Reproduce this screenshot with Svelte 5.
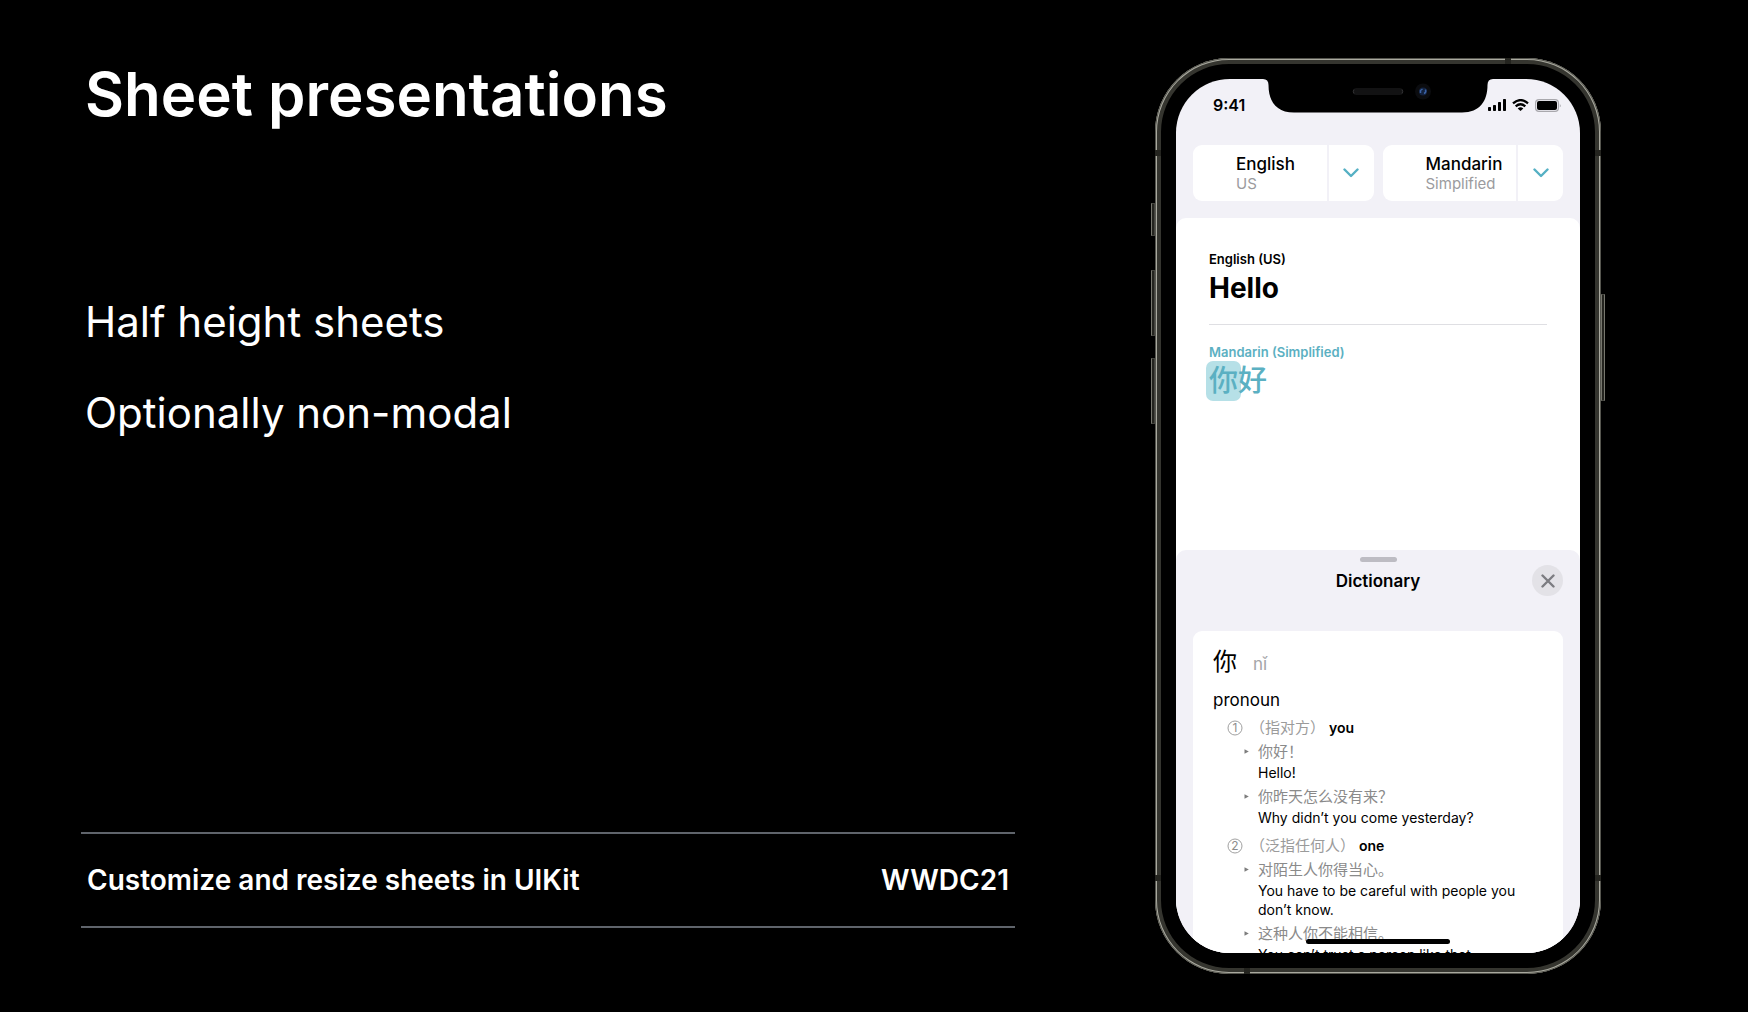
<script lang="ts">
  const points = ['Half height sheets', 'Optionally non-modal'];

  const languages = [
    { name: 'English', variant: 'US' },
    { name: 'Mandarin', variant: 'Simplified' }
  ];

  const senses = [
    {
      mark: '1',
      note: '（指对方）',
      meaning: 'you',
      examples: [
        { source: '你好！', translation: 'Hello!' },
        { source: '你昨天怎么没有来？', translation: 'Why didn’t you come yesterday?' }
      ]
    },
    {
      mark: '2',
      note: '（泛指任何人）',
      meaning: 'one',
      examples: [
        { source: '对陌生人你得当心。', translation: 'You have to be careful with people you don’t know.' },
        { source: '这种人你不能相信。', translation: 'You can’t trust a person like that.' }
      ]
    }
  ];
</script>

<main class="stage">
  <section class="copy">
    <h1>Sheet presentations</h1>
    <ul class="points">
      {#each points as point}
        <li>{point}</li>
      {/each}
    </ul>
    <footer class="session">
      <span>Customize and resize sheets in UIKit</span>
      <span>WWDC21</span>
    </footer>
  </section>

  <section class="phone" aria-label="Translate app">
    <i class="key mute"></i>
    <i class="key up"></i>
    <i class="key down"></i>
    <i class="key power"></i>
    <i class="band across upper"></i>
    <i class="band across lower"></i>
    <i class="band top"></i>
    <i class="band bottom"></i>

    <div class="screen">
      <svg class="notch" viewBox="0 0 230 34" aria-hidden="true">
        <path d="M0 0H230Q224.500 0 224.500 6C224.500 22 217 33.500 199 33.500H31C13 33.500 5.500 22 5.500 6Q5.500 0 0 0Z" fill="#000" />
        <rect x="90" y="9" width="50" height="7" rx="3.500" fill="#121213" />
        <path d="M91 10.500Q89.500 12.500 91 14.500M139 10.500Q140.500 12.500 139 14.500" fill="none" stroke="#343436" />
        <circle cx="160" cy="12.500" r="8" fill="#0b0c0f" />
        <circle cx="160" cy="12.500" r="4" fill="#14233f" />
        <path d="M157.500 14V11.500L159.500 10M161 14.500Q163.500 13.500 162.500 10.500" fill="none" stroke="#3b62a5" stroke-width="1.500" />
      </svg>

      <header class="status">
        <time>9:41</time>
        <div class="indicators">
          <svg width="18" height="12" viewBox="0 0 18 12" aria-hidden="true">
            <rect x="0" y="8" width="3" height="4" rx="0.800" />
            <rect x="5" y="6" width="3" height="6" rx="0.800" />
            <rect x="10" y="3" width="3" height="9" rx="0.800" />
            <rect x="15" y="0" width="3" height="12" rx="0.800" />
          </svg>
          <svg width="17" height="12" viewBox="0 0 17 12" aria-hidden="true">
            <path d="M1 4.400Q8.500 -2.200 16 4.400M3.700 7.300Q8.500 3.200 13.300 7.300" fill="none" stroke="#000" stroke-width="2.300" />
            <path d="M8.500 12L5.700 9.400Q8.500 7.100 11.300 9.400Z" />
          </svg>
          <svg width="27" height="13" viewBox="0 0 27 13" aria-hidden="true">
            <rect x="0.600" y="0.600" width="22.800" height="11.800" rx="3.400" fill="none" stroke="#a9a8ad" stroke-width="1.200" />
            <rect x="2" y="2" width="20" height="9" rx="2" />
            <path d="M24.800 4.500Q26.600 6.500 24.800 8.500Z" fill="#a9a8ad" />
          </svg>
        </div>
      </header>

      <nav class="pickers">
        {#each languages as language}
          <div class="picker">
            <button class="language" type="button">
              <span class="name">{language.name}</span>
              <span class="variant">{language.variant}</span>
            </button>
            <button class="more" type="button" aria-label="Choose {language.name} variant">
              <svg width="16" height="10" viewBox="0 0 16 10" aria-hidden="true">
                <path d="M1.500 1.500L8 8L14.500 1.500" fill="none" stroke="#55b0c4" stroke-width="2.400" stroke-linecap="round" stroke-linejoin="round" />
              </svg>
            </button>
          </div>
        {/each}
      </nav>

      <article class="translation">
        <div class="source">
          <h2>English (US)</h2>
          <p>Hello</p>
        </div>
        <div class="target">
          <h2>Mandarin (Simplified)</h2>
          <p lang="zh-Hans"><mark>你</mark>好</p>
        </div>
      </article>

      <section class="sheet">
        <div class="grabber"></div>
        <div class="bar">
          <h2>Dictionary</h2>
          <button class="close" type="button" aria-label="Close">
            <svg width="14" height="14" viewBox="0 0 14 14" aria-hidden="true">
              <path d="M1.500 1.500L12.500 12.500M12.500 1.500L1.500 12.500" fill="none" stroke="#7c7c81" stroke-width="2.400" stroke-linecap="round" />
            </svg>
          </button>
        </div>

        <div class="entry">
          <div class="headword">
            <span class="character" lang="zh-Hans">你</span>
            <span class="pinyin">nǐ</span>
          </div>
          <p class="class">pronoun</p>
          <ol>
            {#each senses as sense}
              <li class="sense">
                <span class="number">
                  <svg width="16" height="16" viewBox="0 0 16 16" aria-hidden="true">
                    <circle cx="8" cy="8" r="7" fill="none" stroke="#a0a0a0" />
                  </svg>
                  <span>{sense.mark}</span>
                </span>
                <div class="definition">
                  <p class="gloss"><span lang="zh-Hans">{sense.note}</span><b>{sense.meaning}</b></p>
                  {#each sense.examples as example}
                    <div class="example">
                      <svg width="5" height="5" viewBox="0 0 5 5" aria-hidden="true">
                        <path d="M0.500 0.300L4.800 2.500L0.500 4.700Z" fill="#7d7d7d" />
                      </svg>
                      <div>
                        <p class="original" lang="zh-Hans">{example.source}</p>
                        <p>{example.translation}</p>
                      </div>
                    </div>
                  {/each}
                </div>
              </li>
            {/each}
          </ol>
        </div>
      </section>

      <div class="home"></div>
    </div>
  </section>
</main>

<style>
  :global(body) {
    margin: 0;
    background: #000;
  }

  .stage {
    box-sizing: border-box;
    min-height: 100vh;
    display: grid;
    grid-template-columns: 934fr 446fr;
    gap: 140px;
    padding: 58px 147px 38px 81px;
    background: #000;
    color: #fff;
    font-family: Inter, 'Noto Sans CJK SC', sans-serif;
  }

  h1, h2, p, ul, ol {
    margin: 0;
    padding: 0;
    list-style: none;
  }

  button {
    border: 0;
    padding: 0;
    margin: 0;
    background: #fff;
    color: inherit;
    font: inherit;
    text-align: left;
  }

  .copy {
    display: flex;
    flex-direction: column;
  }

  h1 {
    padding-left: 4px;
    font-size: 60px;
    line-height: 72px;
    font-weight: 600;
  }

  .points {
    display: flex;
    flex-direction: column;
    gap: 39px;
    margin-top: 166px;
    padding-left: 4px;
    font-size: 42px;
    line-height: 52px;
  }

  .session {
    display: flex;
    justify-content: space-between;
    margin-top: auto;
    margin-bottom: 46px;
    padding: 30px 6px;
    border-top: 2px solid #5f646b;
    border-bottom: 2px solid #5f646b;
    font-size: 28px;
    line-height: 32px;
    font-weight: 600;
  }

  .phone {
    position: relative;
    box-sizing: border-box;
    align-self: start;
    aspect-ratio: 446 / 916;
    padding: 21px;
    display: flex;
    border-radius: 74px;
    background: #000;
    box-shadow: inset 0 0 0 1px #55554e, inset 0 0 0 2px #a9a99f, inset 0 0 0 6px #35352f;
  }

  .key {
    position: absolute;
    left: -4px;
    box-sizing: border-box;
    width: 4px;
    border: 1px solid #44443e;
    border-left-color: #77776e;
    background: #24241f;
  }

  .mute { top: 145px; height: 33px; }
  .up { top: 212px; height: 66px; }
  .down { top: 300px; height: 66px; }
  .power {
    top: 236px;
    left: auto;
    right: -4px;
    height: 107px;
    border-right-color: #77776e;
  }

  .band {
    position: absolute;
    width: 6px;
    height: 6px;
    background: #24241f;
  }

  .band.across {
    left: 0;
    right: 0;
    width: auto;
    box-sizing: border-box;
    border: solid #24241f;
    border-width: 0 6px;
    background: none;
  }

  .upper { top: 92px; }
  .lower { bottom: 93px; }
  .band.top { top: 0; right: 90px; }
  .band.bottom { bottom: 0; left: 89px; }

  .screen {
    position: relative;
    flex: 1;
    min-width: 0;
    display: flex;
    flex-direction: column;
    overflow: hidden;
    border-radius: 54px;
    background: #f2f1f7;
    color: #000;
  }

  .notch {
    position: absolute;
    top: 0;
    left: 50%;
    width: 230px;
    margin-left: -115px;
  }

  .status {
    display: flex;
    align-items: center;
    justify-content: space-between;
    padding: 16px 18px 0 37px;
    font-size: 16px;
    line-height: 20px;
    font-weight: 600;
  }

  .indicators {
    display: flex;
    align-items: center;
    gap: 6px;
  }

  .pickers {
    display: grid;
    grid-template-columns: 1fr 1fr;
    gap: 9px;
    padding: 30px 17px 17px;
  }

  .picker {
    display: grid;
    grid-template-columns: 1fr 45px;
    gap: 2px;
    border-radius: 9px;
    overflow: hidden;
  }

  .language {
    display: flex;
    flex-direction: column;
    padding: 9px 0 7px 43px;
  }

  .name {
    font-size: 17px;
    line-height: 20px;
    font-weight: 500;
  }

  .variant {
    font-size: 15px;
    line-height: 20px;
    color: #9b9b9e;
  }

  .more {
    display: flex;
    align-items: center;
    justify-content: center;
  }

  .translation {
    flex: 1;
    padding: 33px 33px 0;
    border-radius: 10px 10px 0 0;
    background: #fff;
  }

  .translation h2 {
    font-size: 13px;
    line-height: 16px;
    font-weight: 600;
  }

  .source {
    padding-bottom: 19px;
    border-bottom: 1px solid #dfdfe3;
  }

  .source p {
    margin-top: 4px;
    font-size: 28px;
    line-height: 34px;
    font-weight: 700;
  }

  .target {
    padding-top: 19px;
    color: #5bb0c2;
  }

  .target p {
    margin-top: 1px;
    font-size: 29px;
    line-height: 40px;
    font-weight: 500;
  }

  mark {
    display: inline-block;
    margin: 0 -3px;
    padding: 0 3px;
    border-radius: 7px;
    background: #b6e0e7;
    color: inherit;
  }

  .sheet {
    height: 403px;
    flex: none;
    display: flex;
    flex-direction: column;
    border-radius: 10px 10px 0 0;
    background: #f2f1f7;
    box-shadow: 0 0 0 10px #fff;
    clip-path: inset(0);
  }

  .grabber {
    flex: none;
    align-self: center;
    width: 37px;
    height: 5px;
    margin-top: 7px;
    border-radius: 3px;
    background: #bdbcc3;
  }

  .bar {
    display: grid;
    grid-template-columns: 31px 1fr 31px;
    align-items: center;
    padding: 3px 17px 35px;
  }

  .bar h2 {
    grid-column: 2;
    font-size: 17px;
    line-height: 20px;
    font-weight: 600;
    text-align: center;
  }

  .close {
    display: flex;
    align-items: center;
    justify-content: center;
    height: 31px;
    border-radius: 50%;
    background: #e3e2e7;
  }

  .entry {
    flex: none;
    margin: 0 17px;
    padding: 16px 20px;
    border-radius: 9px;
    background: #fff;
    font-size: 14px;
    line-height: 19px;
  }

  .headword {
    display: flex;
    align-items: baseline;
    gap: 16px;
    line-height: 30px;
  }

  .character { font-size: 24px; }

  .pinyin {
    font-size: 17px;
    color: #a5a5a8;
  }

  .class {
    margin-top: 10px;
    font-size: 17px;
    line-height: 22px;
  }

  .sense {
    display: flex;
    padding-left: 14px;
    margin-top: 9px;
  }

  .sense:first-child { margin-top: 7px; }

  .number {
    display: grid;
    place-items: center;
    align-self: start;
    width: 16px;
    height: 19px;
    font-size: 12px;
    color: #8c8c8c;
  }

  .number > * { grid-area: 1 / 1; }

  .definition {
    flex: 1;
    min-width: 0;
    padding-left: 7px;
  }

  .gloss {
    display: flex;
    gap: 4px;
    color: #9b9b9b;
    font-size: 15px;
  }

  .gloss b {
    color: #000;
    font-size: 14px;
    font-weight: 600;
  }

  .example {
    display: flex;
    gap: 9px;
    margin: 3px 0 0 -6px;
    padding-left: 0;
  }

  .example svg {
    flex: none;
    margin-top: 9px;
  }

  .original {
    font-size: 15px;
    line-height: 23px;
    color: #8a8a8a;
  }

  .home {
    position: absolute;
    bottom: 9px;
    left: 50%;
    width: 144px;
    height: 5px;
    margin-left: -72px;
    border-radius: 3px;
    background: #000;
  }
</style>
